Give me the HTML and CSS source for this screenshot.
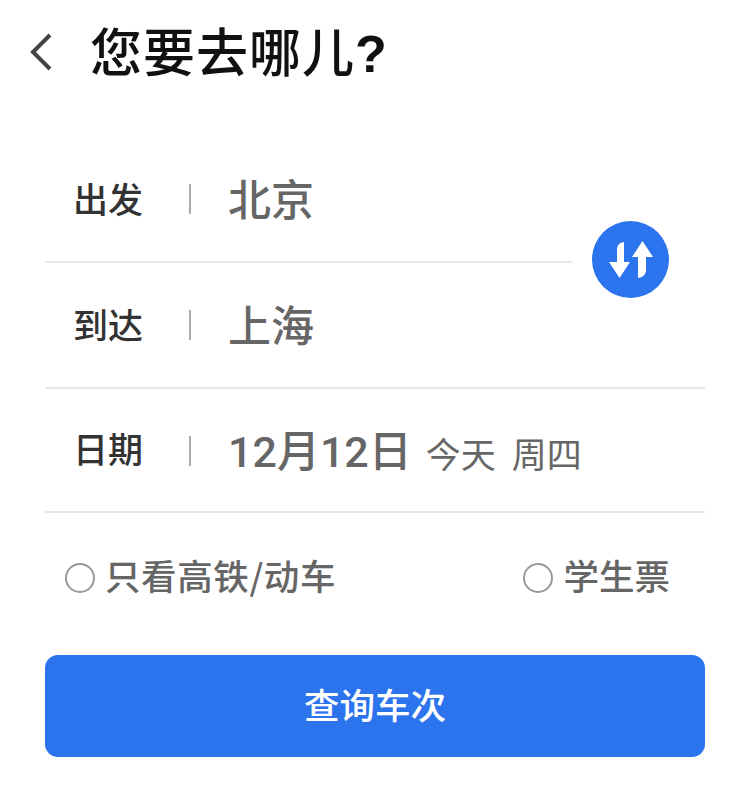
FILE: index.html

```html
<!DOCTYPE html>
<html lang="zh-CN">
<head>
  <meta charset="UTF-8">
  <title>您要去哪儿?</title>
  <meta name="viewport" content="width=device-width, initial-scale=1.0">
  <link rel="stylesheet" href="styles.css">
</head>
<body>
  <header class="top">
    <svg class="back" viewBox="0 0 26 40" width="26" height="40">
      <path d="M22 3 L5 20 L22 37" fill="none" stroke="#444" stroke-width="4"/>
    </svg>
    <h1>您要去哪儿<span class="mark">?</span></h1>
  </header>

  <main class="page">
    <section class="form">
      <div class="row row-short">
        <span class="label">出发</span>
        <span class="value">北京</span>
      </div>
      <div class="row">
        <span class="label">到达</span>
        <span class="value">上海</span>
      </div>
      <div class="row row-date">
        <span class="label">日期</span>
        <span class="value value-date">12月12日</span>
        <span class="sub">今天</span>
        <span class="sub">周四</span>
      </div>
      <button class="swap">
        <svg viewBox="0 0 44 40" width="44" height="40">
          <path d="M15 2 L15 22 L21 22 L10.5 38 L0 22 L8 22 L8 9 Q8 3 15 2 Z" fill="#fff"/>
          <path d="M29 38 L29 17 L23 17 L33.5 1 L44 17 L37 17 L37 31 Q36 37 29 38 Z" fill="#fff"/>
        </svg>
      </button>
    </section>

    <div class="options">
      <label class="check check-wide"><i class="radio"></i>只看高铁/动车</label>
      <label class="check"><i class="radio"></i>学生票</label>
    </div>

    <button class="submit">查询车次</button>
  </main>
</body>
</html>
```

FILE: styles.css

```css
body {
  margin: 0;
  background: #fff;
  font-family: "Noto Sans CJK SC", "Liberation Sans", sans-serif;
  color: #333;
}
.top {
  display: flex;
  align-items: center;
  height: 96px;
  padding: 4px 0 0 28px;
}
.back {
  margin-right: 36px;
}
h1 {
  margin: 0;
  font-size: 52px;
  line-height: 1.2;
  font-weight: 500;
  letter-spacing: 1px;
  color: #111;
}
.mark {
  font-family: "Liberation Sans", sans-serif;
  font-weight: 700;
}
.page {
  padding: 37px 44px 0 45px;
}
.form {
  position: relative;
}
.row {
  display: flex;
  align-items: center;
  height: 124px;
  border-bottom: 2px solid #e8e8e8;
  color: #666;
}
.row-short {
  margin-right: 133px;
}
.row-date {
  height: 120px;
  padding-top: 2px;
}
.label {
  width: 146px;
  margin-right: 37px;
  padding: 0 0 2px 28px;
  box-sizing: border-box;
  font-size: 35px;
  line-height: 1.3;
  font-weight: 500;
  color: #333;
  background: linear-gradient(#aaa, #aaa) right center / 2px 30px no-repeat;
}
.row-date .label {
  padding-bottom: 6px;
}
.value {
  padding-bottom: 3px;
  margin-right: 14px;
  font-size: 43px;
  line-height: 1.3;
  font-weight: 500;
}
.value-date {
  padding: 4px 0 0;
  font-family: "Roboto", "Noto Sans CJK SC", sans-serif;
}
.sub {
  margin-right: 16px;
  padding-top: 4px;
  font-size: 35px;
  line-height: 1.3;
}
.swap {
  position: absolute;
  top: 84px;
  right: 36px;
  width: 77px;
  height: 77px;
  padding: 0;
  border: none;
  border-radius: 50%;
  background: #2c74ee;
  display: flex;
  align-items: center;
  justify-content: center;
}
.options {
  display: flex;
  justify-content: space-between;
  align-items: center;
  height: 130px;
  padding: 0 35px 0 20px;
}
.check {
  display: flex;
  align-items: center;
  padding-bottom: 6px;
  font-size: 35.5px;
  line-height: 1.3;
  font-weight: 500;
  color: #666;
}
.check-wide {
  letter-spacing: 0.6px;
}
.radio {
  width: 26px;
  height: 26px;
  margin: 6px 10px 0 0;
  border: 2px solid #999;
  border-radius: 50%;
}
.submit {
  display: block;
  width: 100%;
  height: 102px;
  margin-top: 12px;
  padding: 0 0 6px;
  border: none;
  border-radius: 13px;
  background: #2c74ee;
  color: #fff;
  font-family: inherit;
  font-size: 35.5px;
  font-weight: 500;
}
```
